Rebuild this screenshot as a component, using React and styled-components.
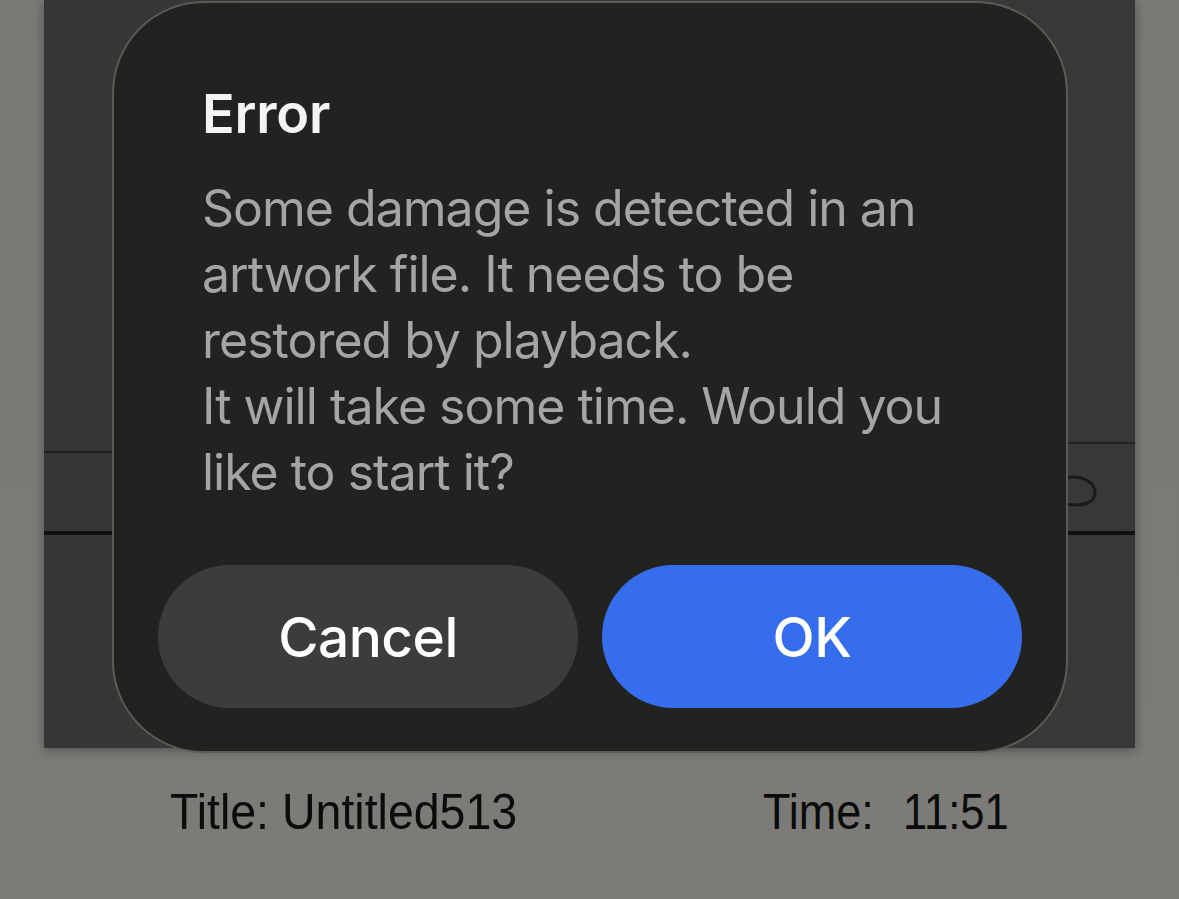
import React from "react";
import styled, { createGlobalStyle } from "styled-components";

const GlobalStyle = createGlobalStyle`
  html, body {
    margin: 0;
    padding: 0;
    background: #7b7a76;
  }
  body {
    width: 1179px;
    height: 899px;
    overflow: hidden;
    font-family: Inter, "Noto Sans", sans-serif;
  }
`;

const Page = styled.div`
  width: 1179px;
  height: 899px;
  background: linear-gradient(180deg, #7a7975 0%, #7c7b77 100%);
  display: flex;
  flex-direction: column;
`;

const Frame = styled.div`
  position: relative;
  margin-left: 44px;
  width: 1091px;
  height: 748px;
`;

const Artwork = styled.div`
  width: 100%;
  height: 100%;
  background: linear-gradient(90deg, #363636 0%, #3b3b3b 50%, #383838 100%);
  box-shadow: 0 2px 10px rgba(0, 0, 0, 0.35);
  svg {
    display: block;
  }
`;

const Dialog = styled.div`
  position: absolute;
  left: 68px;
  top: 1px;
  width: 956px;
  height: 752px;
  box-sizing: border-box;
  border: 2px solid #5c5b56;
  border-radius: 92px;
  background: #222221;
  padding: 80px 44px 43px 44px;
  display: flex;
  flex-direction: column;
`;

const Title = styled.h1`
  margin: 0 0 0 44px;
  font-size: 54px;
  line-height: 62px;
  font-weight: 600;
  color: #f4f4f4;
  letter-spacing: -0.2px;
`;

const Message = styled.p`
  margin: 30px 0 0 44px;
  font-size: 50px;
  line-height: 66px;
  font-weight: 400;
  color: #a5a5a4;
  letter-spacing: -1px;
`;

const Actions = styled.div`
  margin-top: auto;
  display: grid;
  grid-template-columns: 1fr 1fr;
  gap: 24px;
`;

const Button = styled.button`
  height: 143px;
  border: none;
  border-radius: 72px;
  background: ${(p) => (p.$primary ? "#366ded" : "#3c3c3b")};
  color: #ffffff;
  font-family: Inter, "Noto Sans", sans-serif;
  font-size: 55px;
  font-weight: 500;
  letter-spacing: -0.5px;
  padding: 0;
  cursor: pointer;
`;

const Footer = styled.div`
  display: flex;
  padding: 35px 0 0 170px;
  font-family: "Liberation Sans", Arial, sans-serif;
  font-size: 50px;
  color: #0b0b0b;
`;

const Caption = styled.span`
  display: inline-block;
  width: ${(p) => p.$width || "auto"};
  white-space: pre;
  transform: scaleX(${(p) => p.$squeeze || 0.92});
  transform-origin: left center;
`;

export default function App() {
  return (
    <>
      <GlobalStyle />
      <Page>
        <Frame>
          <Artwork>
            <svg width="1091" height="748" viewBox="0 0 1091 748">
              <path d="M0 452 L300 452" stroke="#1d1d1d" strokeWidth="2" fill="none" />
              <path d="M0 533 L1091 533" stroke="#111" strokeWidth="4" fill="none" />
              <path d="M900 443 L1091 443" stroke="#222" strokeWidth="2" fill="none" />
              <path
                d="M1022 478 C1038 474 1050 482 1051 492 C1052 503 1038 507 1022 504"
                stroke="#1a1a1a"
                strokeWidth="3"
                fill="none"
              />
            </svg>
          </Artwork>
          <Dialog>
            <Title>Error</Title>
            <Message>
              Some damage is detected in an
              <br />
              artwork file. It needs to be
              <br />
              restored by playback.
              <br />
              It will take some time. Would you
              <br />
              like to start it?
            </Message>
            <Actions>
              <Button>Cancel</Button>
              <Button $primary>OK</Button>
            </Actions>
          </Dialog>
        </Frame>
        <Footer>
          <Caption $width="593px" $squeeze={0.93}>Title: Untitled513</Caption>
          <Caption $width="140px" $squeeze={0.9}>Time:</Caption>
          <Caption $squeeze={0.87}>11:51</Caption>
        </Footer>
      </Page>
    </>
  );
}
